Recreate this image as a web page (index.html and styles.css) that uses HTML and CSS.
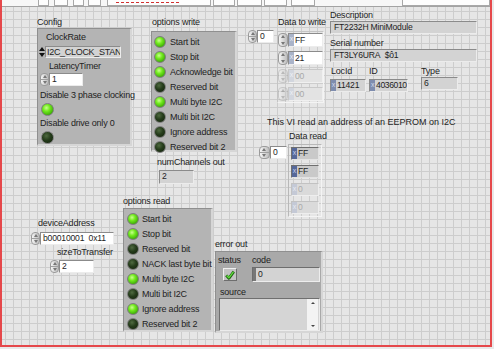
FILE: index.html
```html
<!DOCTYPE html>
<html lang="en">
<head>
    <meta charset="UTF-8">
    <meta name="viewport" content="width=device-width, initial-scale=1.0">
    <title>I2C EEPROM read - front panel</title>
    <link rel="stylesheet" href="styles.css">
</head>
<body>
    <div class="window">
        <div class="toolbar">
            <span class="tb tb-run"></span>
            <span class="tb tb-zoom"></span>
            <span class="tb tb-stop"></span>
            <span class="tb tb-pause"></span>
            <span class="tb tb-font"><span class="font-ink"></span></span>
            <span class="tb tb-align"></span>
            <span class="tb tb-dist"></span>
            <span class="tb tb-resize"></span>
            <span class="tb tb-order"></span>
            <span class="tb tb-search"></span>
        </div>

        <div class="panel">
            <!-- Config cluster -->
            <div class="ctl config">
                <div class="label">Config</div>
                <div class="cluster config-box">
                    <div class="label clock-label">ClockRate</div>
                    <div class="enum">
                        <span class="enum-arrows"></span>
                        <span class="box ind enum-box">I2C_CLOCK_STAN</span>
                    </div>
                    <div class="label latency-label">LatencyTimer</div>
                    <div class="numeric latency">
                        <span class="inc"></span>
                        <span class="box ctrl latency-box">1</span>
                    </div>
                    <div class="label plain-label">Disable 3 phase clocking</div>
                    <span class="led on big"></span>
                    <div class="label plain-label">Disable drive only 0</div>
                    <span class="led off big"></span>
                </div>
            </div>

            <!-- options write -->
            <div class="ctl opt-write">
                <div class="label">options write</div>
                <div class="cluster opt-box write-box">
                    <div class="led-row"><span class="led on"></span>Start bit</div>
                    <div class="led-row"><span class="led on"></span>Stop bit</div>
                    <div class="led-row"><span class="led on"></span>Acknowledge bit</div>
                    <div class="led-row"><span class="led off"></span>Reserved bit</div>
                    <div class="led-row"><span class="led on"></span>Multi byte I2C</div>
                    <div class="led-row"><span class="led off"></span>Multi bit I2C</div>
                    <div class="led-row"><span class="led off"></span>Ignore address</div>
                    <div class="led-row"><span class="led off"></span>Reserved bit 2</div>
                </div>
            </div>

            <div class="ctl num-channels">
                <div class="label">numChannels out</div>
                <div class="box ind channels-box">2</div>
            </div>

            <!-- Data to write array -->
            <div class="ctl data-write">
                <div class="label array-label">Data to write</div>
                <div class="array-row">
                    <div class="numeric index">
                        <span class="inc"></span>
                        <span class="box ctrl index-box">0</span>
                    </div>
                    <div class="array-frame write-frame">
                        <div class="numeric elem">
                            <span class="inc"></span>
                            <span class="box ctrl hex"><span class="radix">x</span>FF</span>
                        </div>
                        <div class="numeric elem">
                            <span class="inc"></span>
                            <span class="box ctrl hex"><span class="radix">x</span>21</span>
                        </div>
                        <div class="numeric elem dim">
                            <span class="inc"></span>
                            <span class="box ctrl hex"><span class="radix">x</span>00</span>
                        </div>
                        <div class="numeric elem dim">
                            <span class="inc"></span>
                            <span class="box ctrl hex"><span class="radix">x</span>00</span>
                        </div>
                    </div>
                </div>
            </div>

            <!-- device info -->
            <div class="ctl device-info">
                <div class="label">Description</div>
                <div class="box ind wide">FT2232H MiniModule</div>
                <div class="label serial-label">Serial number</div>
                <div class="box ind wide">FT3LY6URA&nbsp;&nbsp;$ô1</div>
                <div class="info-row">
                    <div class="info-col locid">
                        <div class="label">LocId</div>
                        <div class="box ind hex"><span class="radix">x</span>11421</div>
                    </div>
                    <div class="info-col devid">
                        <div class="label">ID</div>
                        <div class="box ind hex"><span class="radix">x</span>4036010</div>
                    </div>
                    <div class="info-col type">
                        <div class="label">Type</div>
                        <div class="box ind type-box">6</div>
                    </div>
                </div>
            </div>

            <div class="ctl note label">This VI read an address of an EEPROM on I2C</div>

            <!-- Data read array -->
            <div class="ctl data-read">
                <div class="label array-label">Data read</div>
                <div class="array-row">
                    <div class="numeric index read-index">
                        <span class="inc"></span>
                        <span class="box ctrl index-box read-index-box">0</span>
                    </div>
                    <div class="array-frame read-frame">
                        <span class="box out hex"><span class="radix">x</span>FF</span>
                        <span class="box out hex"><span class="radix">x</span>FF</span>
                        <span class="box out hex dim"><span class="radix">x</span>0</span>
                        <span class="box out hex dim"><span class="radix">x</span>0</span>
                    </div>
                </div>
            </div>

            <div class="ctl device-address">
                <div class="label small-indent">deviceAddress</div>
                <div class="numeric">
                    <span class="inc"></span>
                    <span class="box ctrl address-box">b00010001&nbsp;&nbsp;0x11</span>
                </div>
            </div>

            <div class="ctl size-transfer">
                <div class="label small-indent">sizeToTransfer</div>
                <div class="numeric">
                    <span class="inc"></span>
                    <span class="box ctrl size-box">2</span>
                </div>
            </div>

            <!-- options read -->
            <div class="ctl opt-read">
                <div class="label">options read</div>
                <div class="cluster opt-box read-box">
                    <div class="led-row"><span class="led on"></span>Start bit</div>
                    <div class="led-row"><span class="led on"></span>Stop bit</div>
                    <div class="led-row"><span class="led off"></span>Reserved bit</div>
                    <div class="led-row"><span class="led off"></span>NACK last byte bit</div>
                    <div class="led-row"><span class="led on"></span>Multi byte I2C</div>
                    <div class="led-row"><span class="led off"></span>Multi bit I2C</div>
                    <div class="led-row"><span class="led on"></span>Ignore address</div>
                    <div class="led-row"><span class="led off"></span>Reserved bit 2</div>
                </div>
            </div>

            <!-- error out -->
            <div class="ctl error-out">
                <div class="label">error out</div>
                <div class="cluster error-box">
                    <div class="error-top">
                        <div class="status-col">
                            <div class="label">status</div>
                            <span class="status">
                                <svg width="10" height="10" viewBox="0 0 10 10">
                                    <path d="M1.2 5.4 L3.9 8.3 L8.8 1.6" fill="none" stroke="#1f5f12" stroke-width="2.8" stroke-linejoin="round"/>
                                    <path d="M1.6 5.5 L3.9 7.8 L8.4 1.9" fill="none" stroke="#5fe03c" stroke-width="1.3" stroke-linejoin="round"/>
                                </svg>
                            </span>
                        </div>
                        <div class="code-col">
                            <div class="label">code</div>
                            <div class="box ind code-box"><span class="code-radix"></span>0</div>
                        </div>
                    </div>
                    <div class="label source-label">source</div>
                    <div class="source">
                        <span class="source-text"></span>
                        <span class="scroll"><span class="up"></span><span class="down"></span></span>
                    </div>
                </div>
            </div>
        </div>
    </div>
</body>
</html>
```

FILE: styles.css
```css
body { margin: 0; background-color: #e9e9e9; font-family: "Liberation Sans", Arial, sans-serif; font-size: 9px; letter-spacing: -0.2px; color: #1e1e1e; }

.window { width: 492px; height: 347px; box-sizing: border-box; border: 2px solid #e5484b; border-top: none; overflow: hidden; }

/* toolbar, only its lower edge is visible */
.toolbar { height: 6px; border-bottom: 1px solid #a3a3a3; background-color: #f7f7f7; display: flex; align-items: flex-end; overflow: hidden; }
.tb { height: 12px; box-sizing: border-box; border: 1px solid #a8a8a8; background-color: #fdfdfd; position: relative; }
.tb-run { margin-left: 36px; width: 11px; }
.tb-zoom { margin-left: 5px; width: 14px; }
.tb-stop { margin-left: 5px; width: 11px; }
.tb-pause { margin-left: 4px; width: 13px; }
.tb-font { margin-left: 6px; width: 104px; }
.font-ink { position: absolute; left: 8px; right: 30px; bottom: 2px; height: 1px; background: repeating-linear-gradient(90deg, #d23030 0 3px, transparent 3px 5px); }
.tb-align { margin-left: 2px; width: 23px; }
.tb-dist { margin-left: 2px; width: 25px; }
.tb-resize { margin-left: 2px; width: 23px; }
.tb-order { margin-left: 4px; width: 24px; }
.tb-search { margin-left: 87px; width: 88px; }

/* the front panel with its grid */
.panel { position: relative; height: 338px; background-color: #e6e6e6;
    background-image: linear-gradient(90deg, #cdcdcd 1px, transparent 1px), linear-gradient(#cdcdcd 1px, transparent 1px);
    background-size: 8px 8px; background-position: 3px 4px; }

.ctl { position: absolute; }
.label { line-height: 11px; white-space: nowrap; }

.cluster { box-sizing: border-box; background-color: #b4b4b4; border-top: 1px solid #8f8f8f; border-left: 1px solid #8f8f8f; border-right: 2px solid #d6d6d6; border-bottom: 2px solid #d6d6d6; }

.box { display: block; box-sizing: border-box; height: 13px; line-height: 11px; padding-left: 2px; font-size: 8.6px; white-space: nowrap; overflow: hidden; border: 1px solid; border-color: #8b8b8b #ececec #ececec #8b8b8b; }
.box.ctrl { background-color: #fff; }
.box.ind { background-color: #d3d3d3; }
.box.hex { display: flex; padding-left: 0; }
.radix { width: 5px; flex: none; margin-right: 1px; background-color: #a9b3c9; color: #e6eaf3; font-size: 7px; line-height: 10px; text-align: center; }

.numeric { display: flex; }
.inc { width: 9px; height: 13px; flex: none; box-sizing: border-box; position: relative; border: 1px solid #9b9b9b; border-radius: 4px;
    background: linear-gradient(transparent 46%, #a0a0a0 46%, #a0a0a0 54%, transparent 54%), linear-gradient(90deg, #f4f4f4, #bdbdbd); }
.inc::before, .inc::after { content: ""; position: absolute; left: 2px; border-left: 2px solid transparent; border-right: 2px solid transparent; }
.inc::before { top: 1px; border-bottom: 3px solid #777; }
.inc::after { bottom: 1px; border-top: 3px solid #777; }

.led { display: block; width: 12px; height: 12px; flex: none; border-radius: 50%; box-sizing: border-box; border: 1px solid #7d7d7d; }
.led.on { background: radial-gradient(circle at 40% 35%, #c9ff8e 0, #72ea1e 35%, #3fae08 75%, #2c7d05 100%); }
.led.off { background: radial-gradient(circle at 40% 35%, #4f6a40 0, #253c1b 45%, #12200b 100%); }
.led.big { width: 13px; height: 13px; margin: 2px 0 0 3px; }

/* Config */
.config { left: 35px; top: 10px; }
.config-box { width: 95px; height: 118px; }
.clock-label { margin: 3px 0 0 8px; }
.enum { display: flex; margin: 3px 0 0 1px; }
.enum-arrows { width: 6px; height: 12px; position: relative; }
.enum-arrows::before, .enum-arrows::after { content: ""; position: absolute; left: 0; border-left: 3px solid transparent; border-right: 3px solid transparent; }
.enum-arrows::before { top: 1px; border-bottom: 4px solid #111; }
.enum-arrows::after { bottom: 1px; border-top: 4px solid #111; }
.enum-box { width: 76px; height: 12px; padding-left: 1px; font-size: 9px; background-color: #d6d6d6; letter-spacing: -0.3px; }
.latency-label { margin: 3px 0 0 11px; }
.latency { margin: 1px 0 0 2px; }
.latency-box { width: 34px; }
.plain-label { margin: 4px 0 0 2px; }
.plain-label + .led + .plain-label { margin-top: 2px; }

/* option LED lists */
.opt-box { padding: 2px 0 0 2px; }
.led-row { display: flex; align-items: center; gap: 4px; height: 15px; white-space: nowrap; }
.opt-write { left: 150px; top: 10px; }
.write-box { width: 86px; height: 121px; margin: 3px 0 0 -1px; }
.opt-read { left: 121px; top: 189px; }
.read-box { width: 90px; height: 124px; margin-top: 1px; padding-left: 3px; }
.read-box .led-row { gap: 3px; }

.num-channels { left: 155px; top: 150px; }
.channels-box { width: 35px; height: 14px; margin: 2px 0 0 2px; }

/* arrays */
.array-label { margin-left: 30px; }
.array-row { display: flex; align-items: flex-start; }
.index { margin-top: 2px; }
.index-box { width: 17px; }
.array-frame { box-sizing: border-box; border: 1px solid; border-color: #c4c4c4 #f4f4f4 #f4f4f4 #c4c4c4; display: flex; flex-direction: column; }

.data-write { left: 246px; top: 10px; }
.write-frame { margin: 3px 0 0 3px; width: 47px; padding: 1px 0 1px 0; gap: 4px; }
.elem .inc { width: 10px; height: 14px; }
.elem .box { width: 35px; height: 14px; line-height: 12px; }
.elem.dim .inc { opacity: 0.4; }
.elem.dim .box { background-color: #e3e3e3; color: #a8a8a8; border-color: #c8c8c8 #f0f0f0 #f0f0f0 #c8c8c8; }
.elem.dim .radix { background-color: #d2d6de; color: #eef0f4; }

.data-read { left: 257px; top: 124px; }
.read-index { margin-top: 4px; }
.read-index .inc { width: 11px; }
.read-frame { margin: 2px 0 0 1px; width: 34px; padding: 2px; gap: 5px; border-color: #b8b8b8 #f4f4f4 #f4f4f4 #b8b8b8; }
.box.out { width: 28px; background-color: #c9c9c9; border-color: #6f6f6f #e2e2e2 #e2e2e2 #6f6f6f; }
.box.out .radix { background-color: #56689a; color: #c6d0ea; }
.box.out.dim { background-color: #dadada; color: #aaa; border-color: #c2c2c2 #eee #eee #c2c2c2; }
.box.out.dim .radix { background-color: #c4c9d6; color: #e8ebf1; }

/* device information */
.device-info { left: 328px; top: 3px; }
.wide { width: 147px; padding-left: 3px; }
.serial-label { margin-top: 4px; }
.info-row { display: flex; margin-top: 4px; }
.info-col .label { margin-bottom: 2px; }
.locid { width: 36px; }
.locid .label { margin-left: 1px; }
.devid { width: 39px; margin-left: 3px; }
.devid .box { letter-spacing: -0.4px; }
.type { width: 37px; margin-left: 13px; }
.type .label { margin-bottom: 0; }
.info-col .box { width: 100%; }
.info-col .box .radix { background-color: #7e8cae; color: #d5dbea; margin-right: 1px; }

.note { left: 265px; top: 110px; letter-spacing: 0; }

.small-indent { margin-left: 7px; }
.device-address { left: 29px; top: 211px; }
.device-address .numeric { margin-top: 3px; }
.address-box { width: 74px; }
.size-transfer { left: 48px; top: 240px; }
.size-transfer .numeric { margin-top: 2px; }
.size-box { width: 35px; }

/* error out */
.error-out { left: 213px; top: 232px; }
.error-box { width: 108px; height: 82px; margin-top: 1px; background-color: #a9a9a9; }
.error-top { display: flex; padding-top: 3px; }
.status-col { width: 32px; margin-left: 2px; }
.status { display: flex; align-items: center; justify-content: center; box-sizing: border-box; width: 14px; height: 13px; margin: 2px 0 0 5px; background-color: #c3c3c3; border: 1px solid; border-color: #efefef #6e6e6e #6e6e6e #efefef; }
.code-col { margin-left: 2px; }
.code-box { display: flex; width: 68px; height: 15px; line-height: 13px; margin-top: 1px; padding-left: 0; background-color: #d0d0d0; border-color: #6d6d6d #ededed #ededed #6d6d6d; }
.code-radix { width: 3px; margin-right: 2px; background-color: #777; }
.source-label { margin: 5px 0 0 4px; }
.source { display: flex; box-sizing: border-box; width: 101px; height: 33px; margin-left: 3px; background-color: #d5d5d5; border: 1px solid; border-color: #6f6f6f #ececec #ececec #6f6f6f; }
.source-text { flex: 1; }
.scroll { width: 11px; margin-right: 1px; background-color: #f3f3f3; display: flex; flex-direction: column; justify-content: space-between; align-items: center; padding: 3px 0; box-sizing: border-box; }
.scroll .up { border-left: 2px solid transparent; border-right: 2px solid transparent; border-bottom: 2px solid #444; }
.scroll .down { border-left: 2px solid transparent; border-right: 2px solid transparent; border-top: 2px solid #444; }
```
